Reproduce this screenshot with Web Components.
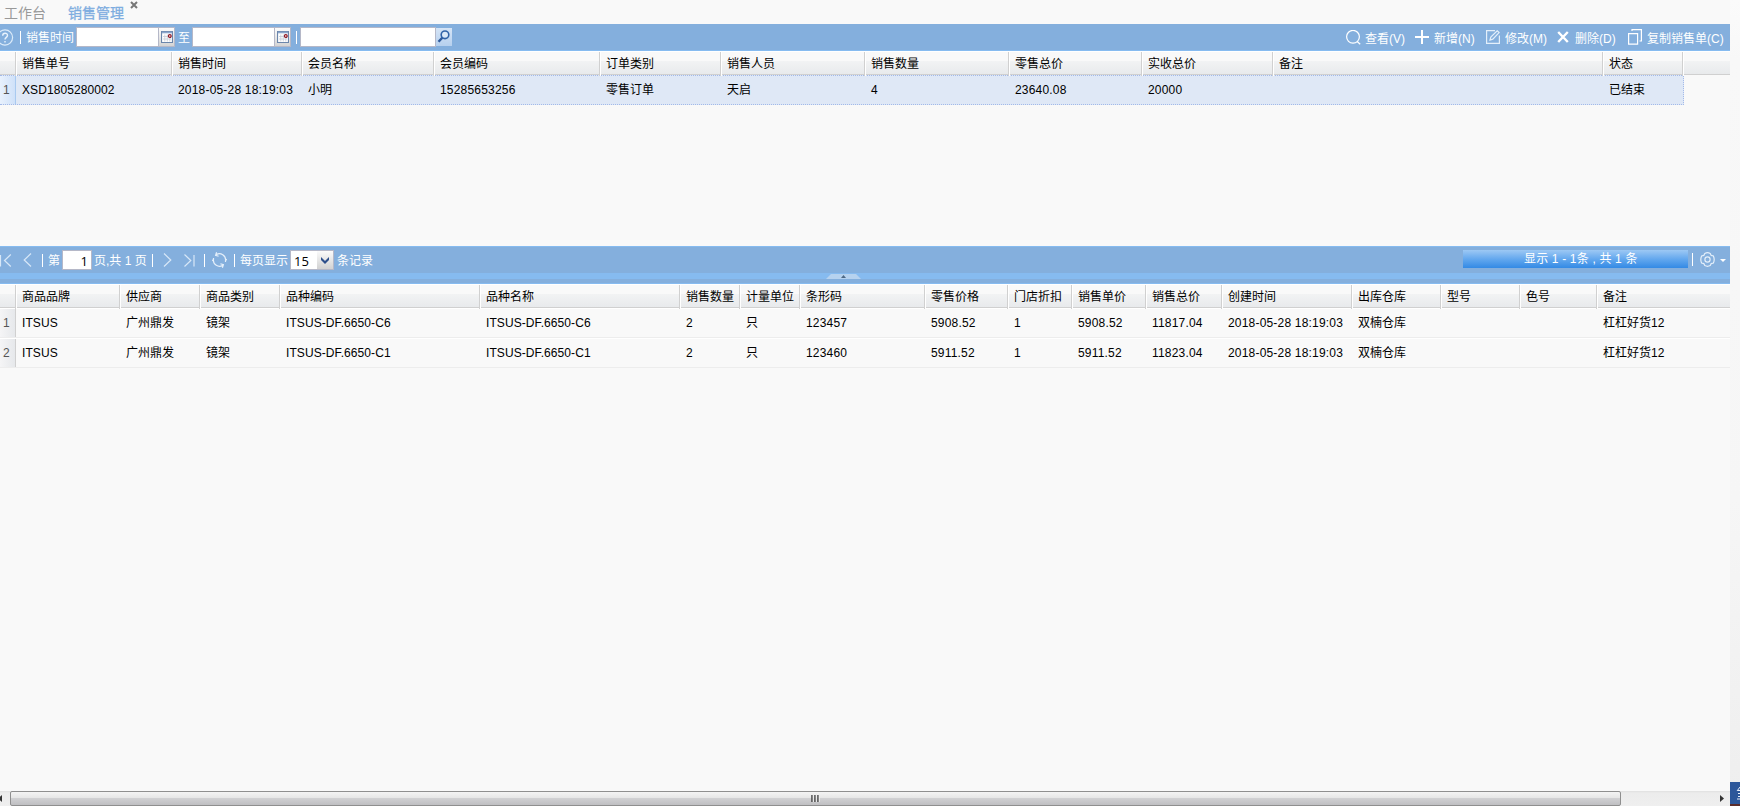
<!DOCTYPE html>
<html lang="zh-CN">
<head>
<meta charset="utf-8">
<title>销售管理</title>
<style>
html,body{margin:0;height:100%;overflow:hidden;background:#f9f9f9}
body{font:12px/16px "Liberation Sans","Noto Sans CJK SC",sans-serif;color:#000}
</style>
</head>
<body>
<sales-app></sales-app>
<script>
const define = (name, html, init) => customElements.define(name, class extends HTMLElement {
  connectedCallback() {
    if (this.shadowRoot) return;
    const t = document.createElement('template');
    t.innerHTML = html;
    this.attachShadow({mode: 'open'}).append(t.content.cloneNode(true));
    if (init) init(this, this.shadowRoot);
  }
});

const svg = (w, h, body) => `<svg width="${w}" height="${h}" viewBox="0 0 ${w} ${h}" fill="none" stroke="#fff" stroke-width="1.2">${body}</svg>`;
const icons = {
  help: svg(14, 17, '<circle cx="5" cy="8.5" r="7.6" stroke="#dcebf9"/><path d="M2.7 6.8C2.7 3.4 7.6 3.5 7.5 6.5C7.4 8.3 5 8.5 5 10.6M5 12v1.5" stroke="#e8f2fc" stroke-width="1.4"/>'),
  calendar: svg(12, 12, '<path d="M.5.5h11v11H.5z" fill="#fff" stroke="#6b86ab"/><path d="M1 1.5h10" stroke="#8aa6cc" stroke-width="1.6"/><path d="M2 5.5h8M2 8h8M3.8 3.5v7M6.3 3.5v7M8.8 3.5v7" stroke="#c5cbd5" stroke-width=".8"/><circle cx="8.8" cy="5" r="1.4" fill="#fff" stroke="#8d1622" stroke-width="1.2"/>'),
  find: svg(13, 13, '<path d="M6 7L1.5 11.8" stroke="#2f5b9d" stroke-width="2.4"/><circle cx="8" cy="4.8" r="3.8" fill="#dbe9f8" stroke="#3264a8" stroke-width="1.6"/>'),
  view: svg(15, 15, '<circle cx="7" cy="6.8" r="6.4"/><path d="M11.2 11.5l3 2.7"/>'),
  add: svg(14, 14, '<path d="M7 0v14M0 7h14" stroke-width="2"/>'),
  edit: svg(14, 14, '<path d="M9 .6H.6v12.8h12.8V5.5" stroke="#e4effa"/><path d="M4 10l.8-3L11.2.8l1.9 1.8-6.3 6.5z" stroke="#e4effa"/>'),
  remove: svg(12, 12, '<path d="M1.2 1l9.6 10M10.8 1L1.2 11" stroke-width="2.4"/>'),
  copy: svg(14, 16, '<path d="M.6 4.6h9v10.5h-9zM4 2V.6h9.4V12H11.5"/>'),
  first: svg(12, 13, '<path d="M.5 1v11.5M10.8 .5L4.5 6.5l6.3 6" stroke="#d7e7f7"/>'),
  prev: svg(9, 14, '<path d="M8 .5L1.2 7l6.8 6.5" stroke="#d7e7f7"/>'),
  next: svg(9, 14, '<path d="M1 .5L7.8 7 1 13.5" stroke="#d7e7f7"/>'),
  last: svg(12, 13, '<path d="M10 1v11.5M.5 .5l6.3 6-6.3 6" stroke="#d7e7f7"/>'),
  refresh: svg(15, 16, '<path d="M4.2 2.8A6 6 0 0 1 13.5 8.6V10M10.8 13.2A6 6 0 0 1 1.5 7.4V6M4.6 .3L3.6 3.3l3 1M10.4 15.7l1-3-3-1M1.2 7.6L.3 8.9M13.8 8.4l.9-1.3" stroke="#e4effa"/>'),
  gear: svg(15, 15, '<path d="M4.8 1.4Q7.5-.1 10.2 1.4L11.2 3.4 13.4 4Q15 7.5 13.4 11L11.2 11.6 10.2 13.6Q7.5 15.1 4.8 13.6L3.8 11.6 1.6 11Q0 7.5 1.6 4L3.8 3.4z" stroke="#e4effa"/><circle cx="7.5" cy="7.5" r="2.6" stroke="#e4effa"/>')
};

define('ui-icon', '<style>:host{display:block;flex:none}svg{display:block}</style>', (el, root) => {
  const t = document.createElement('template');
  t.innerHTML = icons[el.getAttribute('name')];
  root.append(t.content);
});

define('bar-sep', '<style>:host{display:block;flex:none;width:1px;height:13px;background:#fff}</style>');

define('bar-text', `<style>:host{display:block;flex:none;color:#fff;white-space:nowrap}</style><slot></slot>`,
  el => { el.style.width = el.getAttribute('w') + 'px'; });

define('date-field', `<style>
:host{display:flex;flex:none;width:99px;height:20px}
i{flex:1;background:#fff;border:1px solid #b5b8c8;box-sizing:border-box}
b{width:16px;display:flex;align-items:center;justify-content:center;background:linear-gradient(#fcfcfc,#d4d4d4);border:1px solid #b5b8c8;border-left:0;box-sizing:border-box;height:20px}
</style><i></i><b><ui-icon name="calendar"></ui-icon></b>`);

define('search-field', `<style>
:host{display:flex;flex:none;width:152px;height:20px}
i{flex:1;background:#fff;border:1px solid #b5b8c8;box-sizing:border-box}
b{width:16px;height:18px;margin-top:1px;display:flex;justify-content:center;padding:2px 1px 0 0;box-sizing:border-box;background:linear-gradient(#d5e4f6,#b6d0ee)}
</style><i></i><b><ui-icon name="find"></ui-icon></b>`);

define('tab-bar', `<style>
:host{display:flex;height:24px;box-sizing:border-box;font-size:14px;line-height:18px;padding:4px 0 0 4px;color:#999}
span{width:64px}b{font-weight:400;color:#7eade0;width:60px;-webkit-text-stroke:.3px #7eade0}
svg{margin-top:-3px;margin-left:2px}
</style><span>工作台</span><b>销售管理</b><svg width="8" height="8"><path d="M1 1l6 6M7 1L1 7" stroke="#777" stroke-width="2"/></svg>`);

define('filter-bar', `<style>
:host{display:flex;align-items:center;height:27px;box-sizing:border-box;background:#84afdd;border-bottom:1px solid #86bbf0}
.push{flex:1}bar-text{padding-top:1px}bar-text.a{padding-top:3px}
</style>
<ui-icon name="help"></ui-icon>
<bar-sep style="margin-left:6px"></bar-sep>
<bar-text w="48" style="margin-left:5px">销售时间</bar-text>
<date-field style="margin-left:2px"></date-field>
<bar-text w="12" style="margin-left:3px">至</bar-text>
<date-field style="margin-left:2px"></date-field>
<bar-sep style="margin-left:5px"></bar-sep>
<search-field style="margin-left:3px"></search-field>
<div class="push"></div>
<ui-icon name="view"></ui-icon><bar-text class="a" w="50" style="margin-left:4px">查看(V)</bar-text>
<ui-icon name="add"></ui-icon><bar-text class="a" w="52" style="margin-left:5px">新增(N)</bar-text>
<ui-icon name="edit"></ui-icon><bar-text class="a" w="52" style="margin-left:5px">修改(M)</bar-text>
<ui-icon name="remove"></ui-icon><bar-text class="a" w="53" style="margin-left:6px">删除(D)</bar-text>
<ui-icon name="copy"></ui-icon><bar-text class="a" w="83" style="margin-left:5px">复制销售单(C)</bar-text>`);

define('page-bar', `<style>
:host{display:flex;align-items:center;height:27px;box-sizing:border-box;background:#84afdd;border-top:1px solid #86bbf0}
bar-text{padding-top:1px}
.num{box-sizing:border-box;height:20px;background:#fff;border:1px solid #b5b8c8;color:#000;font:13px/20px "Open Sans","Noto Sans",sans-serif;flex:none}
.page{width:30px;text-align:right;padding-right:3px;margin-left:2px}
.size{width:44px;padding-left:3px;margin-left:2px;display:flex;justify-content:space-between}
.size svg{background:linear-gradient(#fbfbfb,#d2d2d2)}
.push{flex:1}
.status{width:225px;height:18px;box-sizing:border-box;padding-left:61px;margin-bottom:3px;color:#fff;line-height:18px;letter-spacing:.17px;background:linear-gradient(#9dc8f4,#64a8ee 50%,#338ae5);flex:none;white-space:pre}
.r{margin-bottom:2px}.caret{border:3px solid transparent;border-top-color:#fff;border-bottom:0;margin:0 4px 0 5px}
</style>
<ui-icon name="first"></ui-icon>
<ui-icon name="prev" style="margin-left:11px"></ui-icon>
<bar-sep style="margin-left:10px"></bar-sep>
<bar-text w="12" style="margin-left:5px">第</bar-text>
<div class="num page">1</div>
<bar-text w="52" style="margin-left:2px">页,共 1 页</bar-text>
<bar-sep style="margin-left:6px"></bar-sep>
<ui-icon name="next" style="margin-left:10px"></ui-icon>
<ui-icon name="last" style="margin-left:12px"></ui-icon>
<bar-sep style="margin-left:8px"></bar-sep>
<ui-icon name="refresh" style="margin-left:7px"></ui-icon>
<bar-sep style="margin-left:7px"></bar-sep>
<bar-text w="48" style="margin-left:5px">每页显示</bar-text>
<div class="num size"><span>15</span><svg width="16" height="18"><path d="M4 6l4 4 4-4v3l-4 4-4-4z" fill="#2d4f8b"/></svg></div>
<bar-text w="36" style="margin-left:3px">条记录</bar-text>
<div class="push"></div>
<div class="status">显示 1 - 1条 , 共 1 条</div>
<bar-sep class="r" style="margin-left:4px"></bar-sep>
<ui-icon class="r" name="gear" style="margin-left:7px"></ui-icon>
<div class="caret r"></div>`);

define('split-handle', `<style>
:host{display:flex;height:11px;box-sizing:border-box;padding-left:826px;background:linear-gradient(#86bbf0 6px,#84afdd 6px,#84afdd 10px,#86bbf0 10px)}
svg{display:block;margin-top:1px}
</style><svg width="36" height="5"><path d="M0 5L5 0H30L35 5z" fill="#b6d2ef"/><path d="M15 4l2.5-3L20 4z" fill="#4d6885"/></svg>`);

define('data-grid', `<style>
:host{display:block}
.h,.r{display:grid;grid-template-columns:var(--cols)}
.h{height:24px;box-sizing:border-box;border-top:1px solid #fff;border-bottom:1px solid #d0d0d0;background:linear-gradient(#f9f9f9 9px,#f2f3f4 9px,#e8eaec)}
.h div{border-right:1px solid #d0d0d0;border-left:1px solid #fff;padding-left:5px;line-height:24px;white-space:nowrap}
.h div:first-child{border-left:0}.h div:last-child{border-right:0}
.r{height:30px;box-sizing:border-box;border-bottom:1px solid #ededed;border-top:1px solid #fff;width:max-content}
.r div{height:28px;box-sizing:border-box;padding-left:6px;line-height:29px;white-space:nowrap}
.r .n{padding-left:3px;color:#555;border-right:1px solid #d0d0d0;background:linear-gradient(90deg,#f5f5f6,#e6e8eb)}
.l{letter-spacing:.19px}.c{letter-spacing:.08px}
:host([selected]) .r{border:1px dotted #a3bae9;border-left:0;background:#dfe8f6;width:1684px}
:host([selected]) .r .n{background:linear-gradient(90deg,#e8f1fd,#cfe1f9);border-right-color:#a9caf0}
</style>`, (el, root) => {
  const d = grids[el.getAttribute('source')];
  el.style.setProperty('--cols', d.widths.map(w => w + 'px').join(' '));
  const line = (cls, cells) => {
    const row = document.createElement('div');
    row.className = cls;
    cells.forEach((c, i) => {
      const cell = document.createElement('div');
      cell.textContent = c;
      if (cls === 'r' && i === 0) cell.className = 'n';
      else if (/^[A-Z]/.test(c)) cell.className = 'c';
      else if (/^[\x20-\x7e]+$/.test(c)) cell.className = 'l';
      row.append(cell);
    });
    root.append(row);
  };
  line('h', d.head);
  d.rows.forEach(r => line('r', r));
});

const grids = {
  orders: {
    widths: [16,156,130,132,166,121,144,144,133,131,330,80,47],
    head: ['','销售单号','销售时间','会员名称','会员编码','订单类别','销售人员','销售数量','零售总价','实收总价','备注','状态',''],
    rows: [['1','XSD1805280002','2018-05-28 18:19:03','小明','15285653256','零售订单','天启','4','23640.08','20000','','已结束']]
  },
  items: {
    widths: [16,104,80,80,200,200,60,60,125,83,64,74,76,130,89,79,77,133],
    head: ['','商品品牌','供应商','商品类别','品种编码','品种名称','销售数量','计量单位','条形码','零售价格','门店折扣','销售单价','销售总价','创建时间','出库仓库','型号','色号','备注'],
    rows: [
      ['1','ITSUS','广州鼎发','镜架','ITSUS-DF.6650-C6','ITSUS-DF.6650-C6','2','只','123457','5908.52','1','5908.52','11817.04','2018-05-28 18:19:03','双楠仓库','','','杠杠好货12'],
      ['2','ITSUS','广州鼎发','镜架','ITSUS-DF.6650-C1','ITSUS-DF.6650-C1','2','只','123460','5911.52','1','5911.52','11823.04','2018-05-28 18:19:03','双楠仓库','','','杠杠好货12']
    ]
  }
};

define('scroll-bar', `<style>
:host{display:flex;align-items:stretch;height:15px;background:linear-gradient(#e0e0e0,#ececec 2px,#efefef)}
.thumb{width:1611px;margin-left:8px;box-sizing:border-box;border:1px solid #8f8f8f;border-radius:2px;background:linear-gradient(#f4f4f4,#e6e6e6 45%,#d0d0d2 50%,#bfbfc2);display:flex;align-items:center;justify-content:center}
.end{margin-left:auto;margin-right:6px}
</style><svg width="2" height="15"><path d="M2 4v7L-2 7.5z" fill="#333"/></svg>
<div class="thumb"><svg width="9" height="7"><path d="M1 0v7M4 0v7M7 0v7" stroke="#444" stroke-width="1.5"/><path d="M2.3 0v7M5.3 0v7M8.3 0v7" stroke="#eee"/></svg></div>
<svg class="end" width="4" height="15"><path d="M0 4v7l4-3.5z" fill="#333"/></svg>`);

define('side-edge', `<style>
:host{display:flex;flex-direction:column;width:10px;background:linear-gradient(#fbfbfb,#f8f8f8 60px,#f6f6f6 500px,#eee)}
svg{margin-top:782px;display:block}
</style><svg width="10" height="24"><path d="M0 0h10v22H0z" fill="#2c579a"/><path d="M0 22h10v2H0z" fill="#5b2d2b"/><path d="M10 5L7 9M8 8.5h2M8 11.5h2M8 14.5h2M7 17h3" stroke="#e8eef8"/></svg>`);

define('sales-app', `<style>
:host{display:flex;width:1740px;height:806px;overflow:hidden}
main{width:1730px;height:806px;display:flex;flex-direction:column;overflow:hidden}
.top{height:195px}.bottom{flex:1}
</style>
<main>
<tab-bar></tab-bar>
<filter-bar></filter-bar>
<data-grid class="top" source="orders" selected></data-grid>
<page-bar></page-bar>
<split-handle></split-handle>
<data-grid class="bottom" source="items"></data-grid>
<scroll-bar></scroll-bar>
</main>
<side-edge></side-edge>`);
</script>
</body>
</html>
